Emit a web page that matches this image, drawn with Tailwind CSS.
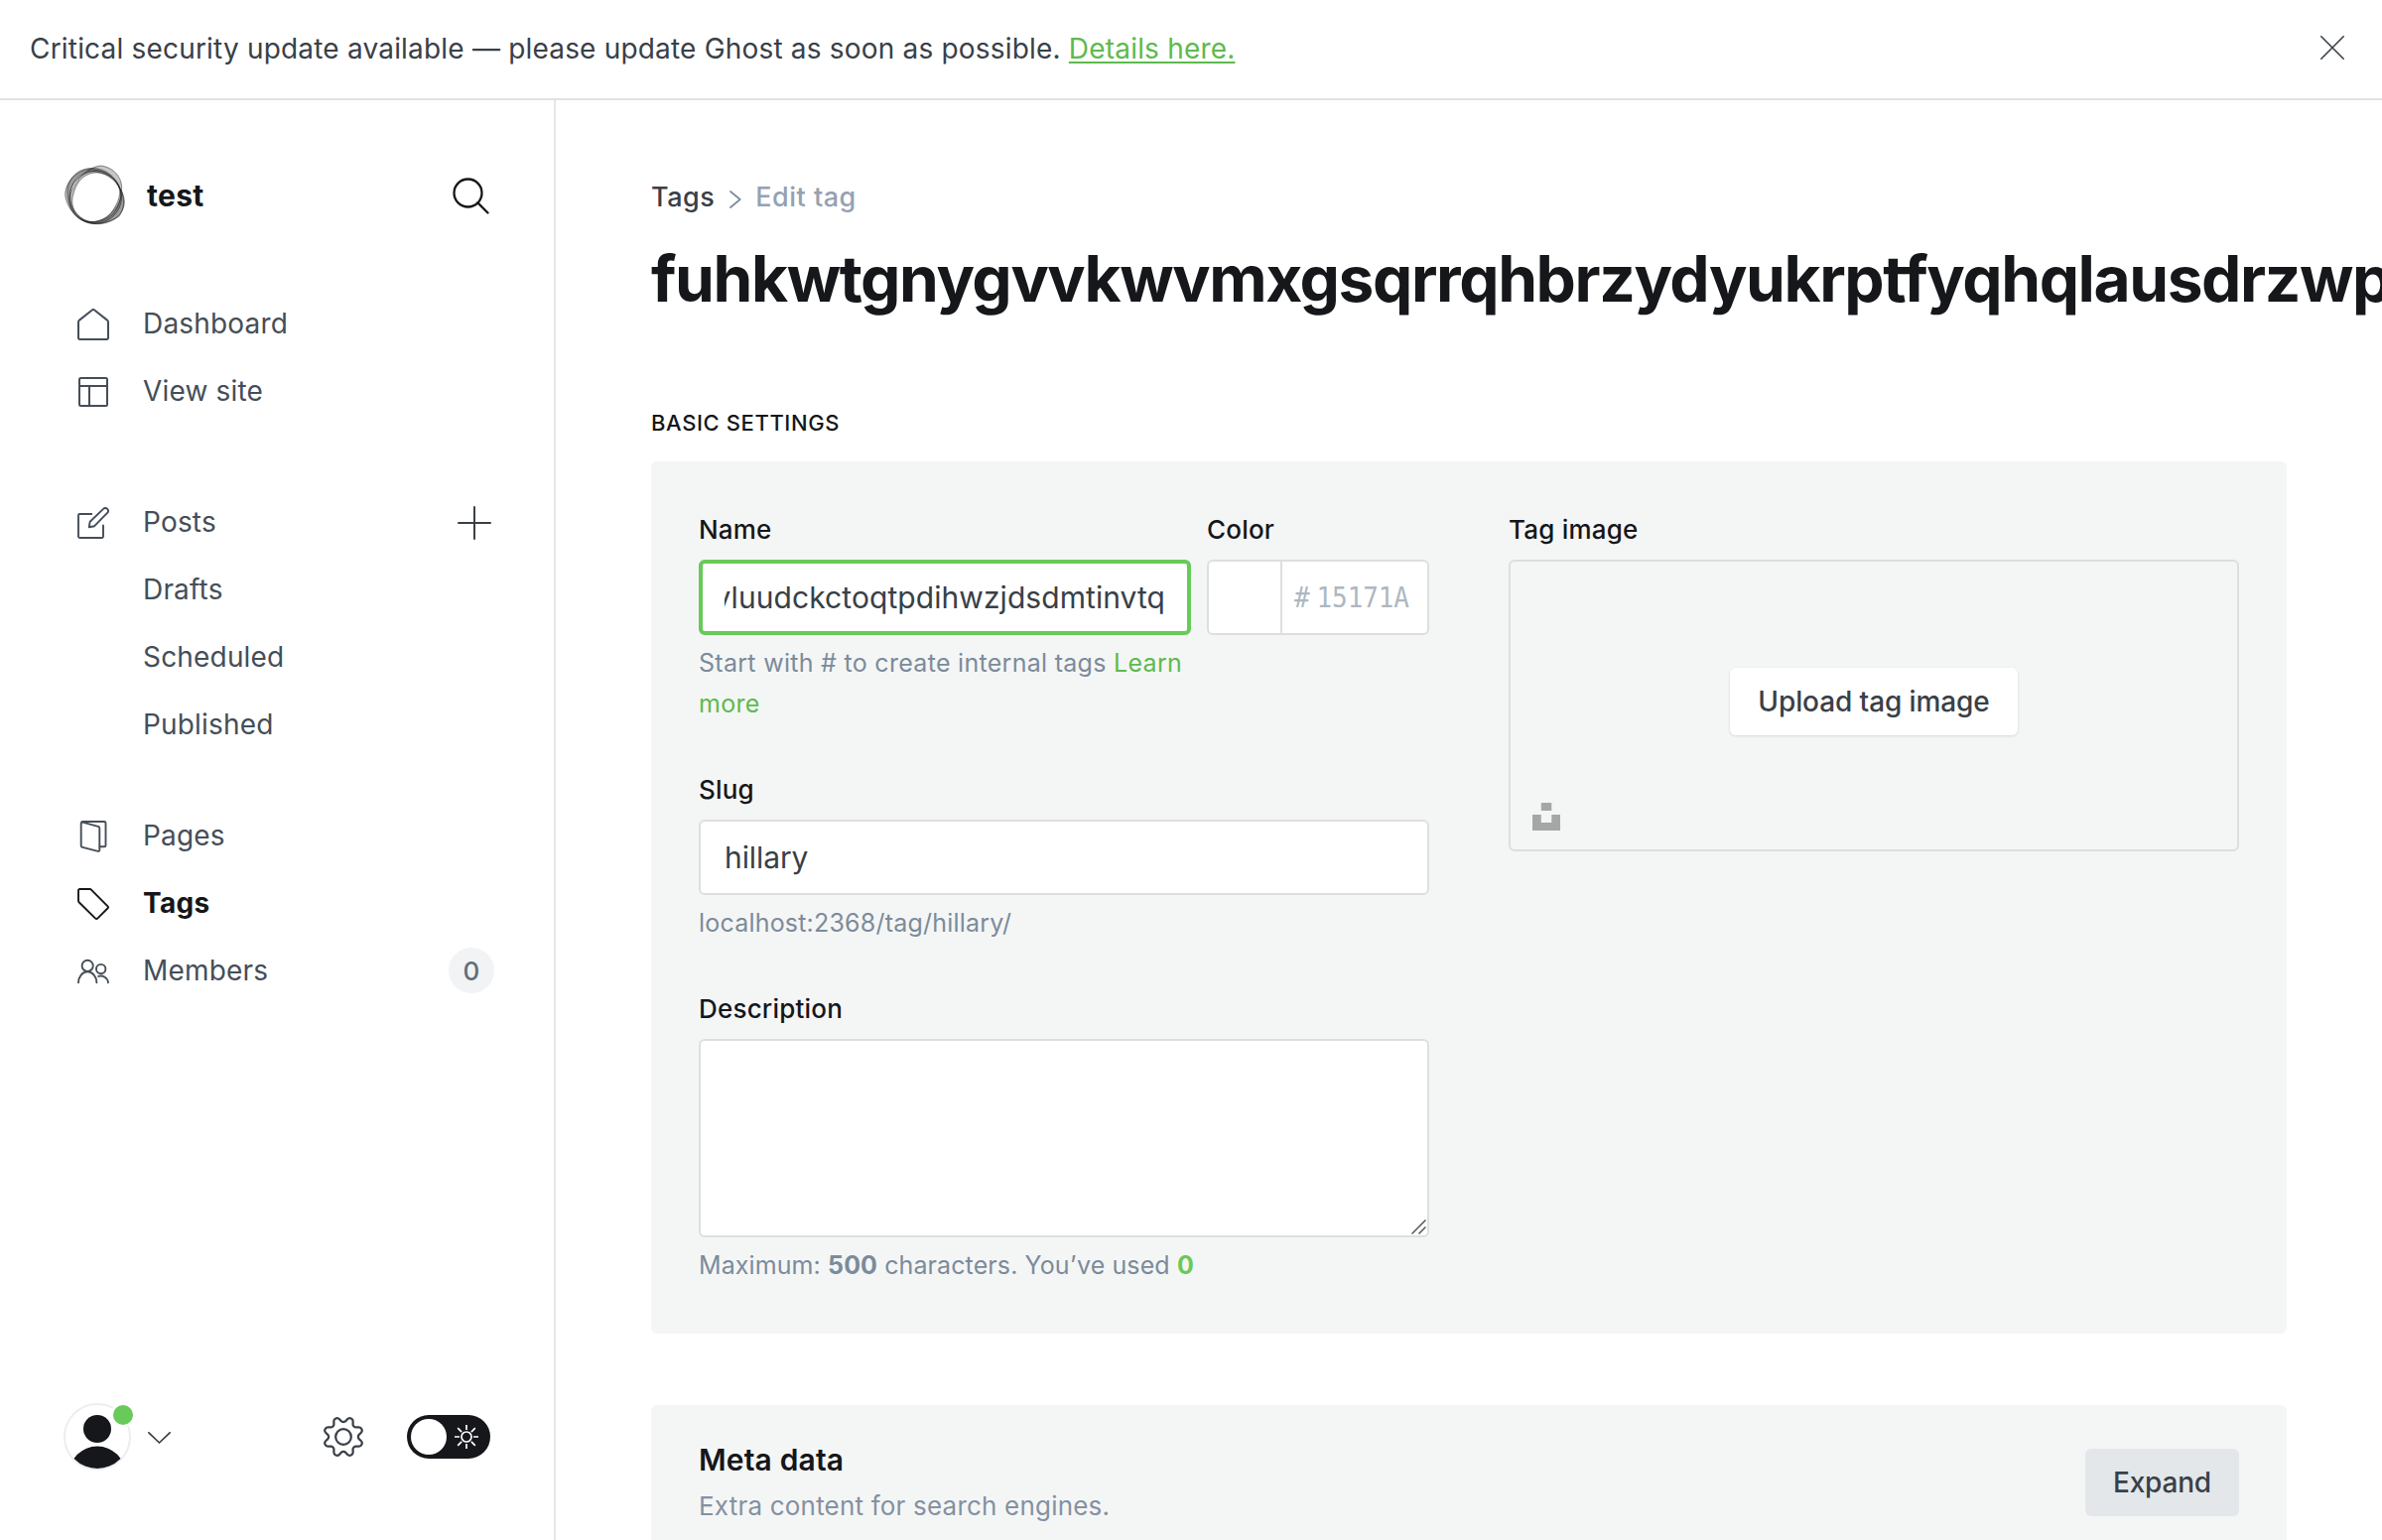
<!DOCTYPE html>
<html lang="en">
<head>
<meta charset="utf-8">
<title>Edit tag</title>
<script src="https://cdn.jsdelivr.net/npm/@tailwindcss/browser@4"></script>
</head>
<body class="flex h-[1552px] w-[2400px] flex-col overflow-hidden bg-white font-[Inter,sans-serif] text-[28px] text-[#394047] antialiased">

<!-- Update banner -->
<header class="flex h-[101px] shrink-0 items-center justify-between border-b-2 border-[#e1e1e1] pr-[38px] pl-[30px]">
  <p class="-mt-[2px] leading-[42px] tracking-[0.19px]">Critical security update available — please update Ghost as soon as possible. <a class="text-[#5dba4e] underline decoration-2 underline-offset-[3px]" href="#">Details here.</a></p>
  <svg class="-mt-[3px] size-[24px]" viewBox="0 0 24 24" fill="none" stroke="#394047" stroke-width="1.6" stroke-linecap="round"><path d="M.8.8l22.4 22.4M23.2.8L.8 23.2"/></svg>
</header>

<div class="flex min-h-0 flex-1">
  <!-- Sidebar -->
  <nav class="flex w-[560px] shrink-0 flex-col border-r-2 border-[#e7e7e7] text-[#454e58] tracking-[0.18px]">
    <div class="mt-[62px] flex h-[68px] items-center pr-[65px] pl-[64px]">
      <svg class="size-[64px]" viewBox="0 0 64 64" fill="#000" fill-opacity=".22" fill-rule="evenodd" stroke="#111" stroke-opacity=".6" stroke-width=".8">
        <path d="M4 31C3 15 14 5 28 4.500C44 4 57 17 58.500 31C60 47 46 61 31 60.500C15 60 5 46 4 31ZM7 28C10 15 22 8 33 7C48 7 58 22 58 32C56 48 44 59 30 59C17 58 4 45 7 28Z"/>
        <path d="M2 34C0 20 12 8 25 5.500C38 5 51 12 57 25C65 38 61 49 51 56C38 64 22 61 13 53C6 46 4 41 2 34ZM6 32C7 18 18 8 27 7.500C41 8 53 15 57 27C60 38 51 48 43 54C32 61 20 60 12 52C7 46 5 40 6 32Z"/>
        <path d="M8 28C14 15 23 4 37 2C50 3 60 14 58.500 27C62 38 61 46 56 53C46 60 32 62 22 58C9 52 4 40 8 28ZM10 30C14 15 24 8 36 9C45 10 54 16 57 26C57 37 51 46 46 52C38 59 26 61 18 55C9 49 7 39 10 30Z"/>
      </svg>
      <span class="ml-[20px] flex-1 text-[30px] font-bold tracking-[0.3px] text-[#15171a]">test</span>
      <svg class="size-[37px]" viewBox="0 0 37 37" fill="none" stroke="#15171a" stroke-width="2.300" stroke-linecap="round"><circle cx="15.500" cy="15.500" r="14"/><path d="M25.400 25.400L35.500 35.500"/></svg>
    </div>

    <ul class="mt-[61px]">
      <li class="flex h-[68px] items-center pl-[78px]">
        <svg class="mt-[2px] mr-[34px] size-[32px]" viewBox="0 0 32 32" fill="none" stroke="currentColor" stroke-width="2" stroke-linejoin="round"><path d="M1 13.400a2 2 0 0 1 .7-1.500L14.800 1.500a1.900 1.900 0 0 1 2.400 0l13.100 10.400a2 2 0 0 1 .7 1.500V29.500a1.500 1.500 0 0 1-1.500 1.500h-27A1.500 1.500 0 0 1 1 29.500z"/></svg>Dashboard
      </li>
      <li class="flex h-[68px] items-center pl-[78px]">
        <svg class="mt-[2px] mr-[34px] size-[32px]" viewBox="0 0 32 32" fill="none" stroke="currentColor" stroke-width="2"><rect x="2" y="2" width="28" height="28" rx="1.500"/><path d="M2 10h28M12 10v20"/></svg>View site
      </li>
    </ul>

    <ul class="mt-[64px]">
      <li class="flex h-[68px] items-center pr-[63px] pl-[78px]">
        <svg class="mt-[2px] mr-[34px] size-[32px]" viewBox="0 0 32 32" fill="none" stroke="currentColor" stroke-width="1.900" stroke-linejoin="round" stroke-linecap="round"><path d="M14.300 7H2.200A1.200 1.200 0 0 0 1 8.200V29.800A1.200 1.200 0 0 0 2.200 31H24.800a1.200 1.200 0 0 0 1.200-1.200V18.500"/><path d="M11.700 20.300l1-5.600L26.100 1.900a2.750 2.750 0 0 1 4 4L17.200 19.200z"/></svg>
        <span class="flex-1">Posts</span>
        <svg class="mt-[2px] size-[34px]" viewBox="0 0 34 34" fill="none" stroke="#394047" stroke-width="2" stroke-linecap="round"><path d="M17 1v32M1 17h32"/></svg>
      </li>
      <li class="flex h-[68px] items-center pl-[144px]">Drafts</li>
      <li class="flex h-[68px] items-center pl-[144px]">Scheduled</li>
      <li class="flex h-[68px] items-center pl-[144px]">Published</li>
    </ul>

    <ul class="mt-[44px]">
      <li class="flex h-[68px] items-center pl-[78px]">
        <svg class="mt-[2px] mr-[34px] size-[32px]" viewBox="0 0 32 32" fill="none" stroke="currentColor" stroke-width="1.900" stroke-linejoin="round" stroke-linecap="round"><path d="M4.200 1.600A1.500 1.500 0 0 1 5.300 1H27a1.500 1.500 0 0 1 1.500 1.500V25a1.300 1.300 0 0 1-1.300 1.300H22.500"/><path d="M5.200 1.700L20.700 5.800a2 2 0 0 1 1.600 1.900V29.600a1.200 1.200 0 0 1-1.600 1.200L5.100 26.900a1.800 1.800 0 0 1-1.400-1.700V2.900a1.200 1.200 0 0 1 1.500-1.200z"/></svg>Pages
      </li>
      <li class="flex h-[68px] items-center pl-[78px] font-bold tracking-[0.3px] text-[#15171a]">
        <svg class="mt-[2px] mr-[34px] size-[32px]" viewBox="0 0 32 32" fill="none" stroke="currentColor" stroke-width="1.900" stroke-linejoin="round"><path d="M1 2.300A1.300 1.300 0 0 1 2.300 1H12.500a2 2 0 0 1 1.400.6L30.600 18.300a1.400 1.400 0 0 1 0 2L20.200 30.600a1.400 1.400 0 0 1-2 0L1.600 14.200A2 2 0 0 1 1 12.800z"/></svg>Tags
      </li>
      <li class="flex h-[68px] items-center pr-[60px] pl-[78px]">
        <svg class="mt-[2px] mr-[34px] size-[32px]" viewBox="0 0 32 32" fill="none" stroke="currentColor" stroke-width="1.900" stroke-linecap="round"><circle cx="10.200" cy="10.300" r="5.600"/><path d="M1 27.300a9.200 11 0 0 1 18.400 0"/><circle cx="23.700" cy="13.600" r="4.700"/><path d="M21.200 20.900a7.500 7.500 0 0 1 9.800 6.400"/></svg>
        <span class="flex-1">Members</span>
        <span class="flex size-[46px] items-center justify-center rounded-full bg-[#f1f3f4] text-[26px] font-medium tracking-normal text-[#626d79]">0</span>
      </li>
    </ul>

    <div class="mt-auto mb-[70px] flex h-[68px] items-center pr-[64px] pl-[64px]">
      <div class="relative size-[68px] rounded-full border-2 border-[#ebeef0]">
        <svg class="size-[64px]" viewBox="0 0 64 64" fill="#15171a"><clipPath id="face"><circle cx="32" cy="32" r="32"/></clipPath><g clip-path="url(#face)"><circle cx="32" cy="24" r="14"/><circle cx="32" cy="70" r="28.500"/></g></svg>
        <span class="absolute -top-[2px] -right-[6px] size-[24px] rounded-full border-2 border-white bg-[#68ca58]"></span>
      </div>
      <svg class="mt-[2px] ml-[17px] h-[12px] w-[23px]" viewBox="0 0 23 12" fill="none" stroke="#394047" stroke-width="1.700" stroke-linecap="round" stroke-linejoin="round"><path d="M.9.8l10.600 10.200L22.100.8"/></svg>
      <svg class="ml-auto size-[40px]" viewBox="0 0 24 24" fill="none" stroke="#394047" stroke-width="1.350" stroke-linecap="round" stroke-linejoin="round"><path d="M10.546 2.438a1.957 1.957 0 0 0 2.908 0L14.400 1.400a1.959 1.959 0 0 1 3.410 1.413l-.071 1.400A1.958 1.958 0 0 0 19.790 6.270l1.400-.071A1.959 1.959 0 0 1 22.600 9.606l-1.039.94a1.961 1.961 0 0 0 0 2.909l1.039.94a1.959 1.959 0 0 1-1.413 3.410l-1.400-.071a1.958 1.958 0 0 0-2.056 2.056l.071 1.400A1.959 1.959 0 0 1 14.400 22.600l-.941-1.039a1.959 1.959 0 0 0-2.908 0L9.606 22.600A1.959 1.959 0 0 1 6.200 21.192l.072-1.400a1.958 1.958 0 0 0-2.056-2.056l-1.400.071A1.958 1.958 0 0 1 1.400 14.400l1.041-.94a1.961 1.961 0 0 0 0-2.909L1.400 9.606A1.958 1.958 0 0 1 2.813 6.200l1.400.071A1.958 1.958 0 0 0 6.267 4.211L6.200 2.810A1.959 1.959 0 0 1 9.606 1.400z"/><circle cx="12" cy="12" r="4.700"/></svg>
      <div class="ml-[44px] flex h-[44px] w-[84px] items-center rounded-full bg-[#15171a] pl-[4px]">
        <span class="size-[36px] rounded-full bg-white"></span>
        <svg class="ml-[8px] size-[24px]" viewBox="0 0 24 24" fill="none" stroke="#fff" stroke-width="1.700"><circle cx="12" cy="12" r="5"/><path d="M12 0v5M12 19v5M0 12h5M19 12h5M3.200 3.200l3.900 3.900M16.900 16.900l3.900 3.900M3.200 20.800l3.900-3.900M16.900 7.100l3.900-3.900"/></svg>
      </div>
    </div>
  </nav>

  <!-- Tag editor -->
  <main class="min-w-0 flex-1 overflow-hidden pt-[78px] pr-[96px] pl-[96px]">
    <div class="flex items-center text-[27px] leading-[40px] font-medium tracking-[0.5px]">
      <a href="#">Tags</a>
      <svg class="mt-[3px] mr-[14px] ml-[15px] h-[18px] w-[12px]" viewBox="0 0 12 18" fill="none" stroke="#7c8b9a" stroke-width="1.700" stroke-linecap="round" stroke-linejoin="round"><path d="M1 1l9.700 8L1 17"/></svg>
      <span class="text-[#95a1b1]">Edit tag</span>
    </div>
    <h1 class="mt-[24px] text-[64px] leading-[76px] font-bold tracking-[-1.41px] whitespace-nowrap text-[#15171a]">fuhkwtgnygvvkwvmxgsqrrqhbrzydyukrptfyqhqlausdrzwpvluudckctoqtpdihwzjdsdmtinvtq</h1>

    <h4 class="mt-[92px] mb-[24px] text-[22px] leading-[30px] font-medium tracking-[0.6px] text-[#15171a] uppercase">Basic settings</h4>

    <section class="flex gap-[80px] rounded-[6px] bg-[#f4f6f6] px-[48px] pt-[50px] pb-[48px] text-[26px] tracking-[0.2px] text-[#15171a]">
      <div class="w-[736px]">
        <div class="flex gap-[16px]">
          <div class="w-[496px]">
            <label class="mb-[11px] block leading-[38px] font-medium">Name</label>
            <div class="h-[76px] rounded-[6px] border-4 border-[#68ca58] bg-white px-[22px]">
              <div class="flex h-full items-center justify-end overflow-hidden text-[30px] tracking-[0.07px] whitespace-nowrap text-[#394047]"><span>vluudckctoqtpdihwzjdsdmtinvtq</span></div>
            </div>
            <p class="mt-[8px] text-[25px] leading-[41px] tracking-[0.29px] text-[#7c8b9a]">Start with # to create internal tags <a class="text-[#5dba4e]" href="#">Learn more</a></p>
          </div>
          <div class="w-[224px]">
            <label class="mb-[11px] block leading-[38px] font-medium">Color</label>
            <div class="flex h-[76px] rounded-[6px] border-2 border-[#dddfdf] bg-white">
              <div class="w-[74px] border-r-2 border-[#dddfdf]"></div>
              <div class="flex scale-y-[1.07] items-center pl-[12px] font-['DejaVu_Sans_Mono',monospace] text-[26px] tracking-[-0.1px] text-[#aeb7c1]"><span>#</span><span class="ml-[7px]">15171A</span></div>
            </div>
          </div>
        </div>
        <label class="mt-[47px] mb-[11px] block leading-[38px] font-medium">Slug</label>
        <div class="flex h-[76px] items-center rounded-[6px] border-2 border-[#dddfdf] bg-white px-[24px] text-[30px] tracking-[-0.1px] text-[#394047]">hillary</div>
        <p class="mt-[8px] text-[25px] leading-[41px] tracking-[0.2px] text-[#7c8b9a]">localhost:2368/tag/hillary/</p>
        <label class="mt-[47px] mb-[11px] block leading-[38px] font-medium">Description</label>
        <div class="flex h-[200px] items-end justify-end rounded-[6px] border-2 border-[#dddfdf] bg-white pr-[1px] pb-[1px]">
          <svg class="size-[15px]" viewBox="0 0 15 15" fill="none" stroke="#555" stroke-width="1.500"><path d="M.5 14.500l14-14M7.500 14.500l7-7"/></svg>
        </div>
        <p class="mt-[8px] text-[25px] leading-[41px] tracking-[0.1px] text-[#7c8b9a]">Maximum: <b>500</b> characters. You’ve used <b class="text-[#68ca58]">0</b></p>
      </div>

      <div class="w-[736px]">
        <label class="mb-[11px] block leading-[38px] font-medium">Tag image</label>
        <div class="relative flex h-[294px] items-center justify-center rounded-[6px] border-2 border-[#dddfdf]">
          <span class="mt-[-8px] flex h-[68px] w-[290px] items-center justify-center rounded-[6px] bg-white text-[28px] font-medium tracking-[-0.1px] text-[#394047] shadow-[0_1px_3px_rgba(0,0,0,0.12)]">Upload tag image</span>
          <svg class="absolute bottom-[19px] left-[22px] size-[28px]" viewBox="0 0 28 28" fill="#a5a7a7"><path d="M8.800 0h10.500v8H8.800zM0 12h8.800v8h10.500v-8H28v16H0z"/></svg>
        </div>
      </div>
    </section>

    <section class="mt-[72px] flex h-[200px] items-start justify-between rounded-[6px] bg-[#f4f6f6] px-[48px]">
      <div class="pt-[37px]">
        <h4 class="text-[30px] leading-[36px] font-semibold tracking-[0.15px] text-[#15171a]">Meta data</h4>
        <p class="mt-[12px] text-[26px] leading-[34px] tracking-[0.2px] text-[#8491a1]">Extra content for search engines.</p>
      </div>
      <button class="mt-[44px] h-[68px] w-[155px] rounded-[6px] bg-[#e3e7ea] font-medium tracking-[-0.2px]">Expand</button>
    </section>
  </main>
</div>
</body>
</html>
